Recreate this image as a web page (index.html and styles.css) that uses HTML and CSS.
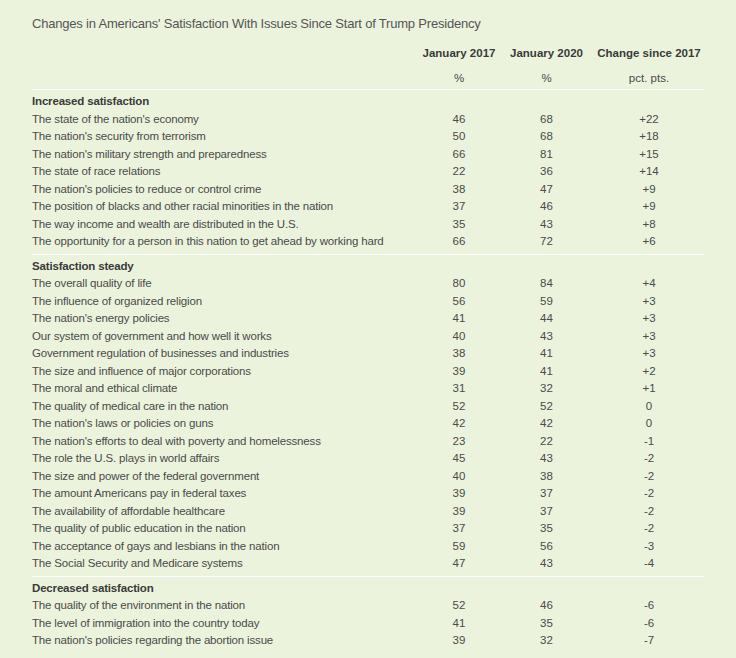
FILE: index.html
```html
<!DOCTYPE html>
<html>
<head>
<meta charset="utf-8">
<link rel="stylesheet" href="styles.css">
</head>
<body>
<h1 class="title">Changes in Americans' Satisfaction With Issues Since Start of Trump Presidency</h1>
<table class="data">
  <colgroup>
    <col class="c-label"><col class="c-num1"><col class="c-num2"><col class="c-num3">
  </colgroup>
  <thead>
    <tr class="head1"><th></th><th>January 2017</th><th>January 2020</th><th>Change since 2017</th></tr>
    <tr class="head2"><th></th><th>%</th><th>%</th><th>pct. pts.</th></tr>
  </thead>
  <tbody>
    <tr class="sec"><td colspan="4">Increased satisfaction</td></tr>
    <tr><td>The state of the nation's economy</td><td>46</td><td>68</td><td>+22</td></tr>
    <tr><td>The nation's security from terrorism</td><td>50</td><td>68</td><td>+18</td></tr>
    <tr><td>The nation's military strength and preparedness</td><td>66</td><td>81</td><td>+15</td></tr>
    <tr><td>The state of race relations</td><td>22</td><td>36</td><td>+14</td></tr>
    <tr><td>The nation's policies to reduce or control crime</td><td>38</td><td>47</td><td>+9</td></tr>
    <tr><td>The position of blacks and other racial minorities in the nation</td><td>37</td><td>46</td><td>+9</td></tr>
    <tr><td>The way income and wealth are distributed in the U.S.</td><td>35</td><td>43</td><td>+8</td></tr>
    <tr class="last"><td>The opportunity for a person in this nation to get ahead by working hard</td><td>66</td><td>72</td><td>+6</td></tr>
  </tbody>
  <tbody>
    <tr class="sec"><td colspan="4">Satisfaction steady</td></tr>
    <tr><td>The overall quality of life</td><td>80</td><td>84</td><td>+4</td></tr>
    <tr><td>The influence of organized religion</td><td>56</td><td>59</td><td>+3</td></tr>
    <tr><td>The nation's energy policies</td><td>41</td><td>44</td><td>+3</td></tr>
    <tr><td>Our system of government and how well it works</td><td>40</td><td>43</td><td>+3</td></tr>
    <tr><td>Government regulation of businesses and industries</td><td>38</td><td>41</td><td>+3</td></tr>
    <tr><td>The size and influence of major corporations</td><td>39</td><td>41</td><td>+2</td></tr>
    <tr><td>The moral and ethical climate</td><td>31</td><td>32</td><td>+1</td></tr>
    <tr><td>The quality of medical care in the nation</td><td>52</td><td>52</td><td>0</td></tr>
    <tr><td>The nation's laws or policies on guns</td><td>42</td><td>42</td><td>0</td></tr>
    <tr><td>The nation's efforts to deal with poverty and homelessness</td><td>23</td><td>22</td><td>-1</td></tr>
    <tr><td>The role the U.S. plays in world affairs</td><td>45</td><td>43</td><td>-2</td></tr>
    <tr><td>The size and power of the federal government</td><td>40</td><td>38</td><td>-2</td></tr>
    <tr><td>The amount Americans pay in federal taxes</td><td>39</td><td>37</td><td>-2</td></tr>
    <tr><td>The availability of affordable healthcare</td><td>39</td><td>37</td><td>-2</td></tr>
    <tr><td>The quality of public education in the nation</td><td>37</td><td>35</td><td>-2</td></tr>
    <tr><td>The acceptance of gays and lesbians in the nation</td><td>59</td><td>56</td><td>-3</td></tr>
    <tr class="last"><td>The Social Security and Medicare systems</td><td>47</td><td>43</td><td>-4</td></tr>
  </tbody>
  <tbody>
    <tr class="sec"><td colspan="4">Decreased satisfaction</td></tr>
    <tr><td>The quality of the environment in the nation</td><td>52</td><td>46</td><td>-6</td></tr>
    <tr><td>The level of immigration into the country today</td><td>41</td><td>35</td><td>-6</td></tr>
    <tr class="last"><td>The nation's policies regarding the abortion issue</td><td>39</td><td>32</td><td>-7</td></tr>
  </tbody>
</table>
</body>
</html>
```
FILE: styles.css
```css
html, body {
  margin: 0;
  background: #ecf3dd;
}
body {
  padding: 14px 32px 0 32px;
  font-family: "Liberation Sans", Arial, sans-serif;
  color: #4a4a4a;
}
.title {
  margin: 0 0 7.5px 0;
  font-size: 13px;
  letter-spacing: -0.2px;
  line-height: 20px;
  font-weight: normal;
  color: #555;
}
.data {
  border-collapse: collapse;
  width: 672px;
  table-layout: fixed;
  font-size: 11.5px;
  line-height: 17.5px;
}
.c-label { width: 387px; }
.c-num1 { width: 80px; }
.c-num2 { width: 95px; }
.c-num3 { width: 110px; }
.data th, .data td {
  padding: 0;
  text-align: center;
  white-space: nowrap;
}
.data td:first-child {
  text-align: left;
  letter-spacing: -0.17px;
}
.head1 th {
  font-weight: bold;
  color: #3a3a3a;
  padding: 3.75px 0;
}
.head2 th {
  font-weight: normal;
  padding: 3px 0 2px 0;
}
.data tbody { border-top: 1px solid #ffffff; }
.sec td {
  font-weight: bold;
  color: #3a3a3a;
  padding-top: 3px;
}
.last td { padding-bottom: 3px; }
```
